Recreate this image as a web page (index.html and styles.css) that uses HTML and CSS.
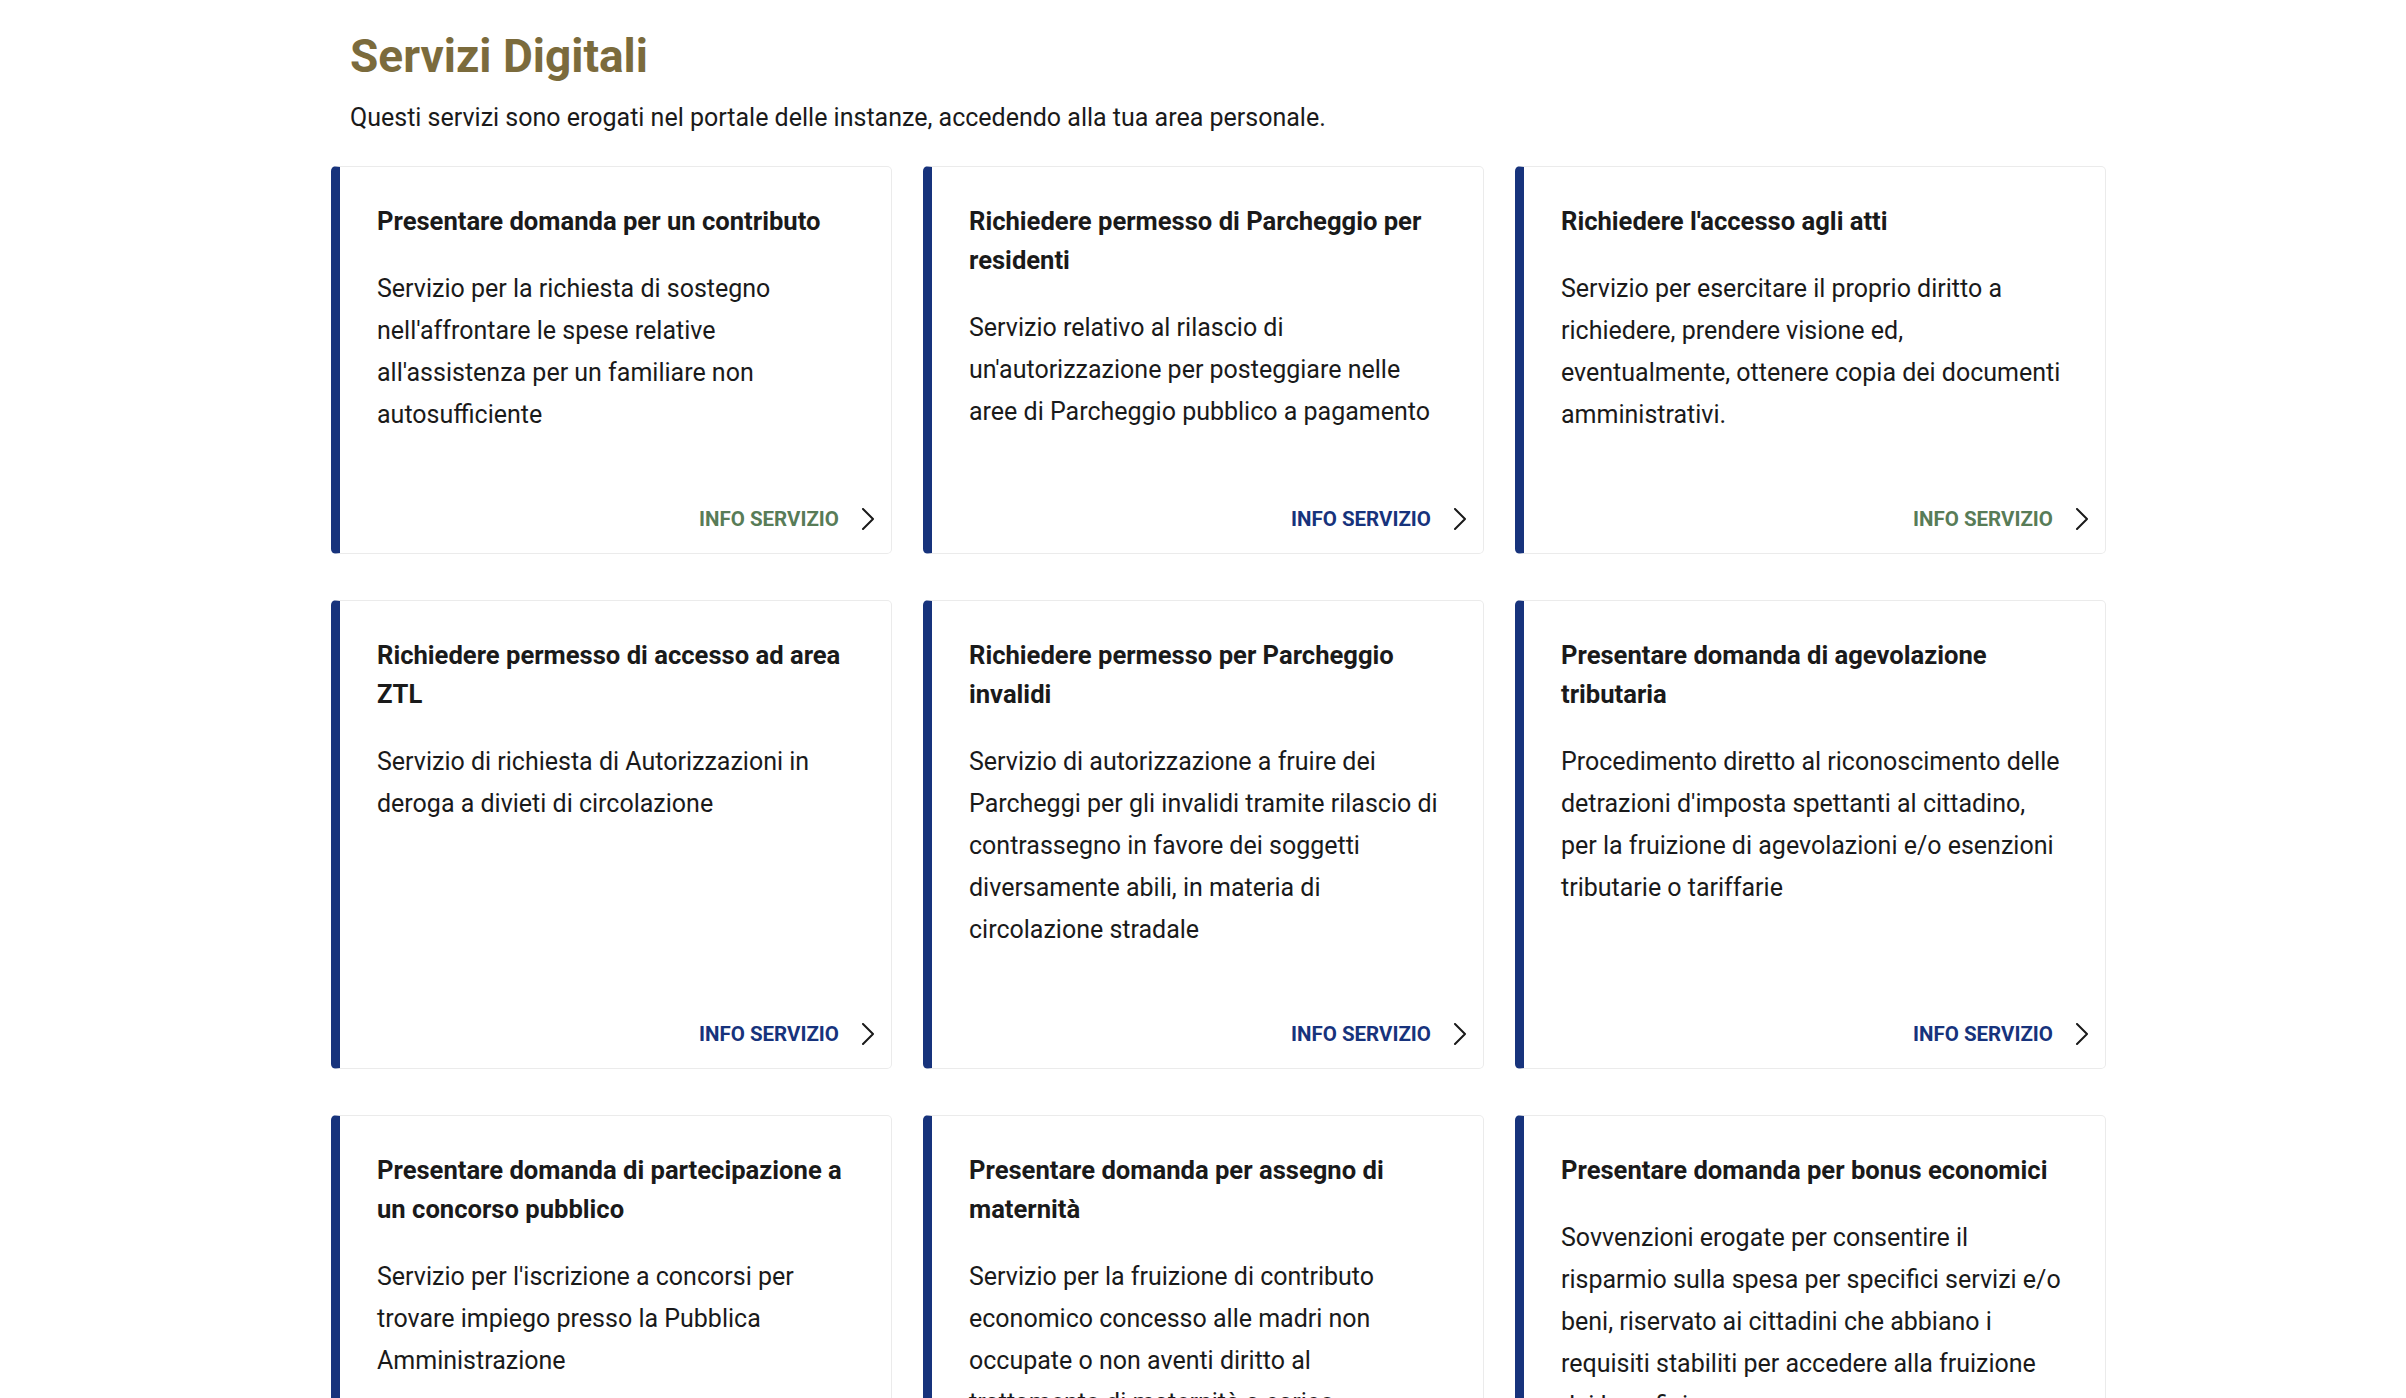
FILE: index.html
```html
<!DOCTYPE html>
<html lang="it">
<head>
<meta charset="utf-8">
<title>Servizi Digitali</title>
<link rel="stylesheet" href="styles.css">
</head>
<body>
<main class="page">
  <h2 class="page-title">Servizi Digitali</h2>
  <p class="page-lead">Questi servizi sono erogati nel portale delle instanze, accedendo alla tua area personale.</p>

  <div class="cards">
    <article class="card">
      <h3 class="card-title">Presentare domanda per un contributo</h3>
      <p class="card-text">Servizio per la richiesta di sostegno<br>nell'affrontare le spese relative<br>all'assistenza per un familiare non<br>autosufficiente</p>
      <a class="card-link visited" href="#">INFO SERVIZIO<svg class="chev" viewBox="0 0 16 22" width="16" height="22"><path d="M3 1 L13 11 L3 21"/></svg></a>
    </article>
    <article class="card">
      <h3 class="card-title">Richiedere permesso di Parcheggio per<br>residenti</h3>
      <p class="card-text">Servizio relativo al rilascio di<br>un'autorizzazione per posteggiare nelle<br>aree di Parcheggio pubblico a pagamento</p>
      <a class="card-link" href="#">INFO SERVIZIO<svg class="chev" viewBox="0 0 16 22" width="16" height="22"><path d="M3 1 L13 11 L3 21"/></svg></a>
    </article>
    <article class="card">
      <h3 class="card-title">Richiedere l'accesso agli atti</h3>
      <p class="card-text">Servizio per esercitare il proprio diritto a<br>richiedere, prendere visione ed,<br>eventualmente, ottenere copia dei documenti<br>amministrativi.</p>
      <a class="card-link visited" href="#">INFO SERVIZIO<svg class="chev" viewBox="0 0 16 22" width="16" height="22"><path d="M3 1 L13 11 L3 21"/></svg></a>
    </article>

    <article class="card">
      <h3 class="card-title">Richiedere permesso di accesso ad area<br>ZTL</h3>
      <p class="card-text">Servizio di richiesta di Autorizzazioni in<br>deroga a divieti di circolazione</p>
      <a class="card-link" href="#">INFO SERVIZIO<svg class="chev" viewBox="0 0 16 22" width="16" height="22"><path d="M3 1 L13 11 L3 21"/></svg></a>
    </article>
    <article class="card">
      <h3 class="card-title">Richiedere permesso per Parcheggio<br>invalidi</h3>
      <p class="card-text">Servizio di autorizzazione a fruire dei<br>Parcheggi per gli invalidi tramite rilascio di<br>contrassegno in favore dei soggetti<br>diversamente abili, in materia di<br>circolazione stradale</p>
      <a class="card-link" href="#">INFO SERVIZIO<svg class="chev" viewBox="0 0 16 22" width="16" height="22"><path d="M3 1 L13 11 L3 21"/></svg></a>
    </article>
    <article class="card">
      <h3 class="card-title">Presentare domanda di agevolazione<br>tributaria</h3>
      <p class="card-text">Procedimento diretto al riconoscimento delle<br>detrazioni d'imposta spettanti al cittadino,<br>per la fruizione di agevolazioni e/o esenzioni<br>tributarie o tariffarie</p>
      <a class="card-link" href="#">INFO SERVIZIO<svg class="chev" viewBox="0 0 16 22" width="16" height="22"><path d="M3 1 L13 11 L3 21"/></svg></a>
    </article>

    <article class="card">
      <h3 class="card-title">Presentare domanda di partecipazione a<br>un concorso pubblico</h3>
      <p class="card-text">Servizio per l'iscrizione a concorsi per<br>trovare impiego presso la Pubblica<br>Amministrazione</p>
      <a class="card-link" href="#">INFO SERVIZIO<svg class="chev" viewBox="0 0 16 22" width="16" height="22"><path d="M3 1 L13 11 L3 21"/></svg></a>
    </article>
    <article class="card">
      <h3 class="card-title">Presentare domanda per assegno di<br>maternità</h3>
      <p class="card-text">Servizio per la fruizione di contributo<br>economico concesso alle madri non<br>occupate o non aventi diritto al<br>trattamento di maternità a carico</p>
      <a class="card-link" href="#">INFO SERVIZIO<svg class="chev" viewBox="0 0 16 22" width="16" height="22"><path d="M3 1 L13 11 L3 21"/></svg></a>
    </article>
    <article class="card">
      <h3 class="card-title">Presentare domanda per bonus economici</h3>
      <p class="card-text">Sovvenzioni erogate per consentire il<br>risparmio sulla spesa per specifici servizi e/o<br>beni, riservato ai cittadini che abbiano i<br>requisiti stabiliti per accedere alla fruizione<br>dei benefici</p>
      <a class="card-link" href="#">INFO SERVIZIO<svg class="chev" viewBox="0 0 16 22" width="16" height="22"><path d="M3 1 L13 11 L3 21"/></svg></a>
    </article>
  </div>
</main>
</body>
</html>
```

FILE: styles.css
```css
html, body {
  margin: 0;
  padding: 0;
  background: #ffffff;
}

body {
  font-family: Roboto, "Liberation Sans", Arial, sans-serif;
  color: #1a1a1a;
}

.page {
  padding: 28px 0 0 331px;
}

.page-title {
  margin: 0 0 0 19px;
  font-size: 46px;
  line-height: 56px;
  font-weight: 700;
  color: #7b6b3c;
}

.page-lead {
  margin: 15px 0 0 19px;
  font-size: 25px;
  line-height: 38px;
  font-weight: 400;
  color: #1a1a1a;
}

.cards {
  margin-top: 29px;
  display: grid;
  grid-template-columns: 561px 561px 591px;
  column-gap: 31px;
  row-gap: 46px;
}

.card {
  display: flex;
  flex-direction: column;
  background: #ffffff;
  border: 1px solid #ebebeb;
  border-left: 9px solid #17337c;
  border-radius: 5px;
  padding: 35px 15px 19px 37px;
}

.card-title {
  margin: 0;
  font-size: 25.6px;
  line-height: 39px;
  font-weight: 700;
  color: #1a1a1a;
  white-space: nowrap;
}

.card-text {
  margin: 27px 0 0 0;
  font-size: 25px;
  line-height: 42px;
  font-weight: 400;
  color: #1a1a1a;
  white-space: nowrap;
}

.card-link {
  margin-top: auto;
  padding-top: 68px;
  display: flex;
  justify-content: flex-end;
  align-items: center;
  height: 30px;
  box-sizing: content-box;
  font-size: 20.5px;
  line-height: 30px;
  font-weight: 700;
  color: #17337c;
  text-decoration: none;
}

.card-link.visited {
  color: #587c57;
}

.chev {
  margin-left: 21px;
  fill: none;
  stroke: #1a1a1a;
  stroke-width: 2;
  stroke-linecap: round;
  stroke-linejoin: round;
}
```
